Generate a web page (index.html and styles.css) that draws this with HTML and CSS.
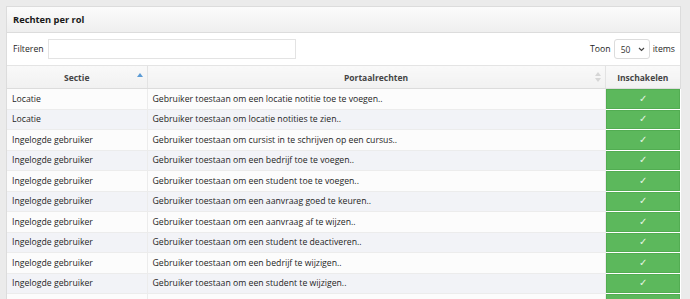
FILE: index.html
```html
<!DOCTYPE html>
<html lang="nl">
<head>
<meta charset="utf-8">
<title>Rechten per rol</title>
<link rel="stylesheet" href="styles.css">
</head>
<body>
<div class="panel">
  <div class="panel-heading">Rechten per rol</div>
  <div class="toolbar">
    <label class="filter">Filteren <input type="text" class="filter-input"></label>
    <div class="length">Toon <span class="select">50<svg class="chev" width="7" height="5" viewBox="0 0 7 5"><path d="M1 1l2.5 2.5L6 1" fill="none" stroke="#444" stroke-width="1.2"/></svg></span> items</div>
  </div>
  <table class="grid">
    <colgroup><col class="c1"><col class="c2"><col class="c3"></colgroup>
    <thead>
      <tr>
        <th class="sort-asc">Sectie<svg class="sorticon" width="6" height="4" viewBox="0 0 6 4"><path d="M3 0L6 4H0z" fill="#5b9bd5"/></svg></th>
        <th class="sortable">Portaalrechten<svg class="sorticon" width="6" height="10" viewBox="0 0 6 10"><path d="M3 0L6 4H0z M3 10L0 6h6z" fill="#d6d6d6"/></svg></th>
        <th>Inschakelen</th>
      </tr>
    </thead>
    <tbody>
      <tr><td>Locatie</td><td>Gebruiker toestaan om een locatie notitie toe te voegen..</td><td class="on">✓</td></tr>
      <tr><td>Locatie</td><td>Gebruiker toestaan om locatie notities te zien..</td><td class="on">✓</td></tr>
      <tr><td>Ingelogde gebruiker</td><td>Gebruiker toestaan om cursist in te schrijven op een cursus..</td><td class="on">✓</td></tr>
      <tr><td>Ingelogde gebruiker</td><td>Gebruiker toestaan om een bedrijf toe te voegen..</td><td class="on">✓</td></tr>
      <tr><td>Ingelogde gebruiker</td><td>Gebruiker toestaan om een student toe te voegen..</td><td class="on">✓</td></tr>
      <tr><td>Ingelogde gebruiker</td><td>Gebruiker toestaan om een aanvraag goed te keuren..</td><td class="on">✓</td></tr>
      <tr><td>Ingelogde gebruiker</td><td>Gebruiker toestaan om een aanvraag af te wijzen..</td><td class="on">✓</td></tr>
      <tr><td>Ingelogde gebruiker</td><td>Gebruiker toestaan om een student te deactiveren..</td><td class="on">✓</td></tr>
      <tr><td>Ingelogde gebruiker</td><td>Gebruiker toestaan om een bedrijf te wijzigen..</td><td class="on">✓</td></tr>
      <tr><td>Ingelogde gebruiker</td><td>Gebruiker toestaan om een student te wijzigen..</td><td class="on">✓</td></tr>
      <tr><td>Ingelogde gebruiker</td><td>Gebruiker toestaan om een student te verwijderen..</td><td class="on">✓</td></tr>
    </tbody>
  </table>
</div>
</body>
</html>
```
FILE: styles.css
```css
html, body {
  margin: 0;
  padding: 0;
}
body {
  background: #ebebeb;
  font-family: "Open Sans", "Liberation Sans", sans-serif;
  font-size: 8.7px;
  color: #1e1e1e;
  overflow: hidden;
  height: 299px;
}
.panel {
  margin: 6px 9px 0 6px;
  background: #fff;
  border: 1px solid #dcdcdc;
}
.panel-heading {
  height: 25px;
  line-height: 26px;
  padding: 0 6px;
  font-size: 9.3px;
  font-weight: 700;
  color: #1a1a1a;
  background: linear-gradient(#fbfbfb, #efefef);
  border-bottom: 1px solid #dcdcdc;
}
.toolbar {
  display: flex;
  align-items: center;
  justify-content: space-between;
  height: 32px;
  padding: 0 5px 0 6px;
  border-bottom: 1px solid #e4e4e4;
}
.filter {
  display: flex;
  align-items: center;
  gap: 4px;
}
.filter-input {
  box-sizing: border-box;
  width: 248px;
  height: 20px;
  margin: 0;
  padding: 0;
  border: 1px solid #e3e3e3;
  background: #fff;
}
.length {
  display: flex;
  align-items: center;
  gap: 3px;
}
.select {
  display: flex;
  align-items: center;
  justify-content: space-between;
  box-sizing: border-box;
  width: 36px;
  height: 20px;
  padding: 0 4px 0 6px;
  border: 1px solid #dcdcdc;
  border-radius: 3px;
  font-size: 8.5px;
  color: #333;
}
.grid {
  width: 100%;
  border-collapse: collapse;
  table-layout: fixed;
}
.c1 { width: 140px; }
.c2 { width: 458px; }
.c3 { width: 75px; }
.grid th {
  position: relative;
  height: 22px;
  padding: 0;
  font-size: 8.5px;
  font-weight: 700;
  color: #444;
  text-align: center;
  background: linear-gradient(#f9f9f9, #f1f1f1);
  border-right: 1px solid #e3e3e3;
  border-bottom: 1px solid #dcdcdc;
}
.grid th:last-child { border-right: 0; }
.sorticon {
  position: absolute;
  right: 4px;
  top: 50%;
  transform: translateY(-50%);
}
.sort-asc .sorticon { top: 7px; transform: none; }
.grid td {
  height: 19.5px;
  padding: 0 5px;
  line-height: 12px;
  white-space: nowrap;
  border-right: 1px solid #ececec;
  border-bottom: 1px solid #ececec;
}
.grid tbody tr:nth-child(odd) td { background: #fcfcfc; }
.grid tbody tr:nth-child(even) td { background: #f2f3f7; }
.grid tbody tr td.on {
  background: #5cb85c;
  color: #e6f5e6;
  text-align: center;
  font-size: 9.5px;
  border: 1px solid #fff;
  border-top: 0;
  box-shadow: inset 0 0 0 1px #52ad52;
}
```
